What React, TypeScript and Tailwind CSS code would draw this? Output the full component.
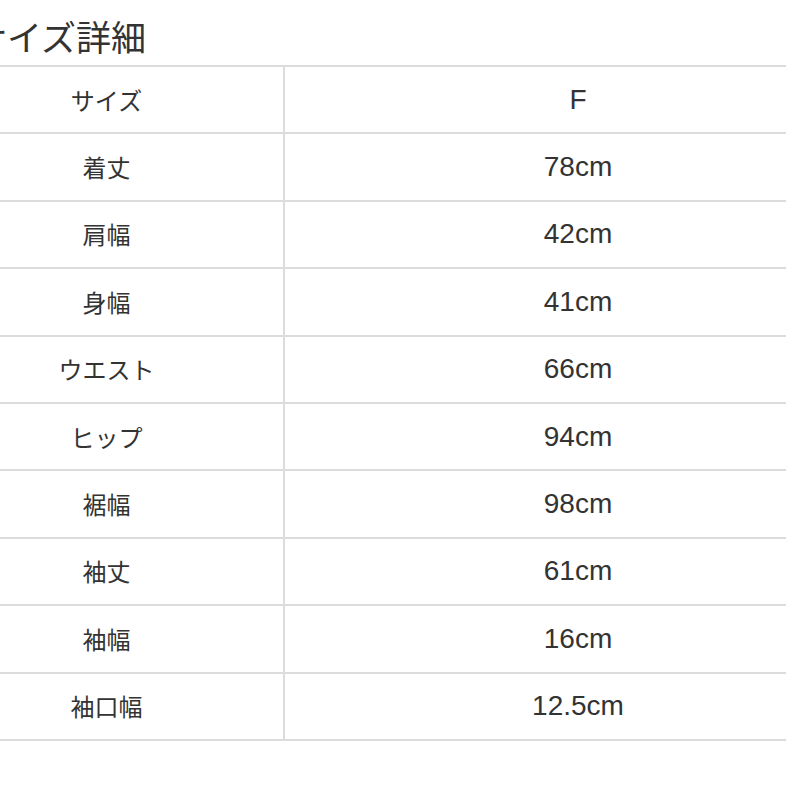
const ROWS: [string, string][] = [
  ['サイズ', 'F'],
  ['着丈', '78cm'],
  ['肩幅', '42cm'],
  ['身幅', '41cm'],
  ['ウエスト', '66cm'],
  ['ヒップ', '94cm'],
  ['裾幅', '98cm'],
  ['袖丈', '61cm'],
  ['袖幅', '16cm'],
  ['袖口幅', '12.5cm'],
];

const jp = { fontFamily: '"Noto Sans CJK JP", "Noto Sans", sans-serif' };
const num = { fontFamily: '"Liberation Sans", Arial, sans-serif' };

export default function App() {
  return (
    <div className="w-[786px] h-[786px] overflow-hidden bg-white text-[#333]">
      <div className="h-[65px] ml-[-28px] flex items-center pt-[8px] text-[35px] whitespace-nowrap" style={jp}>
        サイズ詳細
      </div>
      <div className="ml-[-70px] w-[941px] border-t-2 border-[#dcdcdc]">
        {ROWS.map(([label, value]) => (
          <div key={label} className="flex h-[67.4px] border-b-2 border-[#dcdcdc]">
            <div className="w-[355px] shrink-0 border-r-2 border-[#dcdcdc] flex items-center justify-center text-[24px]" style={jp}>
              {label}
            </div>
            <div className="flex-1 flex items-center justify-center text-[28px]" style={num}>
              {value}
            </div>
          </div>
        ))}
      </div>
    </div>
  );
}
